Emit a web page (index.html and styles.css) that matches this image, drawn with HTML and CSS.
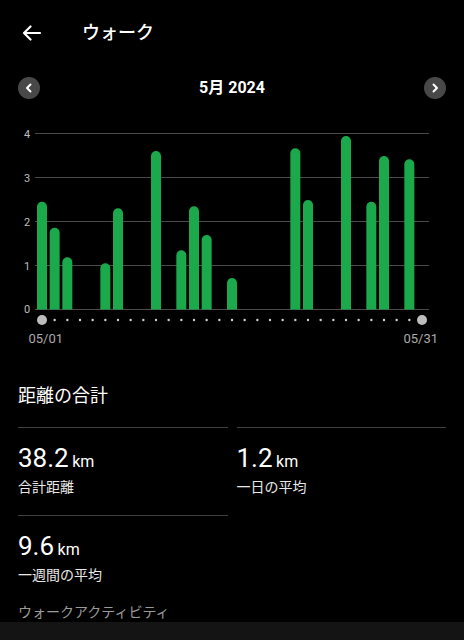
FILE: index.html
```html
<!DOCTYPE html>
<html lang="ja">
<head>
<meta charset="utf-8">
<title>ウォーク</title>
<link rel="stylesheet" href="styles.css">
</head>
<body>
<div class="screen">
  <header class="app-bar">
    <svg class="back" width="20" height="16" viewBox="0 0 20 16">
      <path d="M2 8 H18 M2 8 L8.5 1.5 M2 8 L8.5 14.5" fill="none" stroke="#fff" stroke-width="2.2" stroke-linecap="round" stroke-linejoin="round"/>
    </svg>
    <h1 class="title">ウォーク</h1>
  </header>

  <div class="month-nav">
    <button class="nav-btn" aria-label="前の月">
      <svg width="22" height="22" viewBox="0 0 22 22"><path d="M12.5 7.5 L9 11 L12.5 14.5" fill="none" stroke="#fff" stroke-width="2" stroke-linecap="round" stroke-linejoin="round"/></svg>
    </button>
    <div class="month">5月 2024</div>
    <button class="nav-btn" aria-label="次の月">
      <svg width="22" height="22" viewBox="0 0 22 22"><path d="M9.5 7.5 L13 11 L9.5 14.5" fill="none" stroke="#fff" stroke-width="2" stroke-linecap="round" stroke-linejoin="round"/></svg>
    </button>
  </div>

  <svg class="chart" width="464" height="240" viewBox="0 110 464 240">
    <g class="grid" stroke="#4a4a4a" stroke-width="1">
      <line x1="35" y1="133.5" x2="429" y2="133.5"/>
      <line x1="35" y1="177.5" x2="429" y2="177.5"/>
      <line x1="35" y1="221.5" x2="429" y2="221.5"/>
      <line x1="35" y1="265.5" x2="429" y2="265.5"/>
      <line x1="35" y1="309.5" x2="429" y2="309.5"/>
    </g>
    <g class="ylabels" fill="#bdbdbd" font-size="11" text-anchor="middle">
      <text x="27" y="137.5">4</text>
      <text x="27" y="181.5">3</text>
      <text x="27" y="225.5">2</text>
      <text x="27" y="269.5">1</text>
      <text x="27" y="313">0</text>
    </g>
    <g class="bars" fill="#1ba94c">
      <path d="M37 309.5 V206.7 a5 5 0 0 1 10 0 V309.5 Z"/>
      <path d="M49.67 309.5 V232.7 a5 5 0 0 1 10 0 V309.5 Z"/>
      <path d="M62.33 309.5 V262.3 a5 5 0 0 1 10 0 V309.5 Z"/>
      <path d="M100.33 309.5 V268.3 a5 5 0 0 1 10 0 V309.5 Z"/>
      <path d="M113 309.5 V213.3 a5 5 0 0 1 10 0 V309.5 Z"/>
      <path d="M151 309.5 V156 a5 5 0 0 1 10 0 V309.5 Z"/>
      <path d="M176.33 309.5 V255.3 a5 5 0 0 1 10 0 V309.5 Z"/>
      <path d="M189 309.5 V211.3 a5 5 0 0 1 10 0 V309.5 Z"/>
      <path d="M201.67 309.5 V240 a5 5 0 0 1 10 0 V309.5 Z"/>
      <path d="M227 309.5 V283 a5 5 0 0 1 10 0 V309.5 Z"/>
      <path d="M290.33 309.5 V153.3 a5 5 0 0 1 10 0 V309.5 Z"/>
      <path d="M303 309.5 V205 a5 5 0 0 1 10 0 V309.5 Z"/>
      <path d="M341 309.5 V141 a5 5 0 0 1 10 0 V309.5 Z"/>
      <path d="M366.33 309.5 V206.7 a5 5 0 0 1 10 0 V309.5 Z"/>
      <path d="M379 309.5 V161 a5 5 0 0 1 10 0 V309.5 Z"/>
      <path d="M404.33 309.5 V164.3 a5 5 0 0 1 10 0 V309.5 Z"/>
    </g>
    <g class="dots" fill="#cfcfcf">
      <circle cx="54.67" cy="320" r="1.2"/><circle cx="67.33" cy="320" r="1.2"/>
      <circle cx="80" cy="320" r="1.2"/><circle cx="92.67" cy="320" r="1.2"/>
      <circle cx="105.33" cy="320" r="1.2"/><circle cx="118" cy="320" r="1.2"/>
      <circle cx="130.67" cy="320" r="1.2"/><circle cx="143.33" cy="320" r="1.2"/>
      <circle cx="156" cy="320" r="1.2"/><circle cx="168.67" cy="320" r="1.2"/>
      <circle cx="181.33" cy="320" r="1.2"/><circle cx="194" cy="320" r="1.2"/>
      <circle cx="206.67" cy="320" r="1.2"/><circle cx="219.33" cy="320" r="1.2"/>
      <circle cx="232" cy="320" r="1.2"/><circle cx="244.67" cy="320" r="1.2"/>
      <circle cx="257.33" cy="320" r="1.2"/><circle cx="270" cy="320" r="1.2"/>
      <circle cx="282.67" cy="320" r="1.2"/><circle cx="295.33" cy="320" r="1.2"/>
      <circle cx="308" cy="320" r="1.2"/><circle cx="320.67" cy="320" r="1.2"/>
      <circle cx="333.33" cy="320" r="1.2"/><circle cx="346" cy="320" r="1.2"/>
      <circle cx="358.67" cy="320" r="1.2"/><circle cx="371.33" cy="320" r="1.2"/>
      <circle cx="384" cy="320" r="1.2"/><circle cx="396.67" cy="320" r="1.2"/>
      <circle cx="409.33" cy="320" r="1.2"/>
    </g>
    <circle cx="42" cy="320" r="5" fill="#bdbdbd"/>
    <circle cx="422" cy="320" r="5" fill="#bdbdbd"/>
    <g class="xlabels" fill="#aaaaaa" font-size="13">
      <text x="28.5" y="343.3">05/01</text>
      <text x="438" y="343.3" text-anchor="end">05/31</text>
    </g>
  </svg>

  <section class="stats">
    <h2 class="stats-title">距離の合計</h2>
    <div class="stat-grid">
      <div class="stat">
        <div class="value"><span class="num">38.2</span> <span class="unit">km</span></div>
        <div class="label">合計距離</div>
      </div>
      <div class="stat">
        <div class="value"><span class="num">1.2</span> <span class="unit">km</span></div>
        <div class="label">一日の平均</div>
      </div>
      <div class="stat">
        <div class="value"><span class="num">9.6</span> <span class="unit">km</span></div>
        <div class="label">一週間の平均</div>
      </div>
    </div>
    <div class="activity">ウォークアクティビティ</div>
  </section>
  <div class="bottom-bar"></div>
</div>
</body>
</html>
```

FILE: styles.css
```css
* { box-sizing: border-box; }

html, body {
  margin: 0;
  padding: 0;
  background: #000;
}

body {
  color: #fff;
  font-family: "Roboto", "Noto Sans CJK JP", sans-serif;
}

.screen {
  width: 464px;
  height: 640px;
  overflow: hidden;
  display: flex;
  flex-direction: column;
}

.app-bar {
  height: 66px;
  display: flex;
  align-items: center;
  padding-left: 22px;
  gap: 40px;
}

.back { display: block; }

.title {
  margin: 0;
  font-size: 18px;
  font-weight: 500;
  line-height: 24px;
}

.month-nav {
  height: 44px;
  display: flex;
  align-items: center;
  justify-content: space-between;
  padding: 0 18px;
}

.nav-btn {
  width: 22px;
  height: 22px;
  border: none;
  padding: 0;
  border-radius: 50%;
  background: #484848;
  display: flex;
  align-items: center;
  justify-content: center;
}

.nav-btn svg { display: block; }

.month {
  font-size: 16px;
  font-weight: 700;
  line-height: 22px;
}

.chart {
  display: block;
  flex: none;
  font-family: "Roboto", sans-serif;
}

.stats {
  padding: 0 18px;
}

.stats-title {
  margin: 34px 0 19px;
  font-size: 18px;
  font-weight: 400;
  line-height: 24px;
}

.stat-grid {
  display: grid;
  grid-template-columns: 1fr 1fr;
  column-gap: 9px;
}

.stat {
  border-top: 1px solid #404040;
  padding: 14px 0 17px 0;
}

.value {
  font-size: 14px;
  line-height: 32px;
  height: 32px;
  white-space: nowrap;
}

.num {
  font-size: 26px;
}

.unit {
  font-size: 16px;
}

.label {
  margin-top: 2px;
  font-size: 14px;
  line-height: 22px;
  color: #e8e8e8;
}

.activity {
  font-size: 14px;
  line-height: 19px;
  color: #9a9a9a;
}

.bottom-bar {
  margin-top: auto;
  height: 18px;
  background: #141414;
}
```
